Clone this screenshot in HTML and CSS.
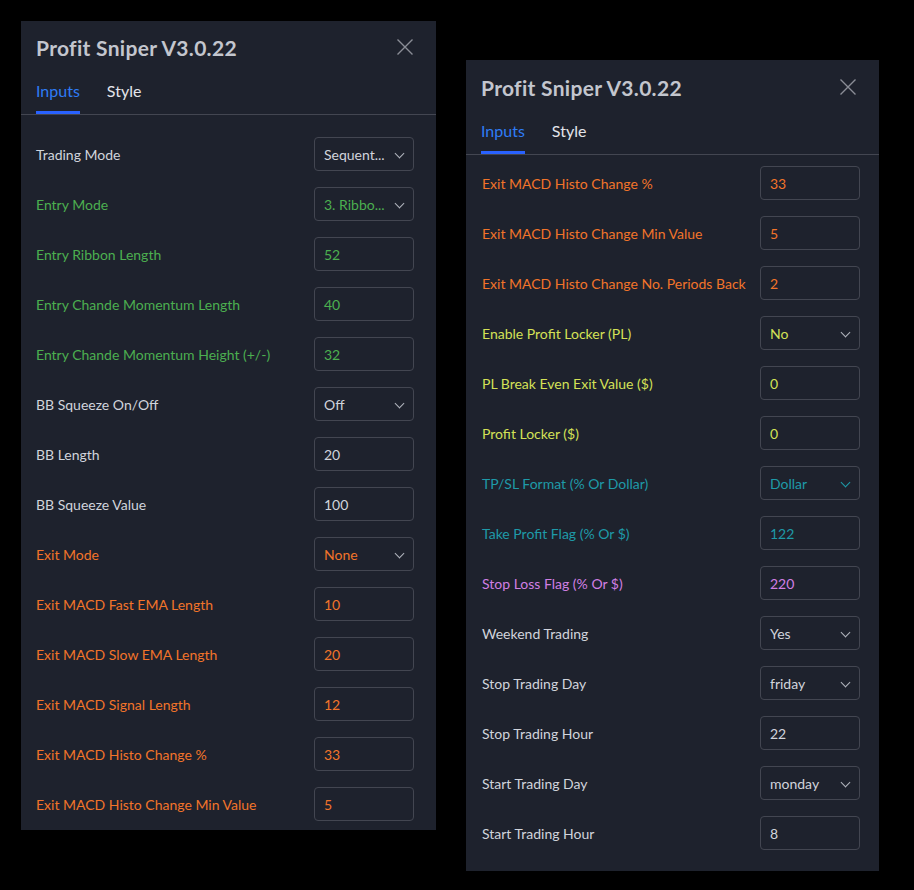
FILE: index.html
```html
<!DOCTYPE html>
<html>
<head>
<meta charset="utf-8">
<link rel="stylesheet" href="styles.css">
</head>
<body>
<div class="stage">
  <section class="panel panel-left">
    <header class="head">
      <h1 class="title">Profit Sniper V3.0.22</h1>
      <svg class="close" width="18" height="18" viewBox="0 0 18 18"><path d="M1.5 1.5 L16.5 16.5 M16.5 1.5 L1.5 16.5" stroke="currentColor" stroke-width="1.4" fill="none"/></svg>
    </header>
    <nav class="tabs"><span class="tab active">Inputs</span><span class="tab">Style</span></nav>
    <div class="rows rows-left">
      <div class="row"><span class="label">Trading Mode</span><span class="field select">Sequent...<i class="chev"></i></span></div>
      <div class="row c-green"><span class="label">Entry Mode</span><span class="field select">3. Ribbo...<i class="chev"></i></span></div>
      <div class="row c-green"><span class="label">Entry Ribbon Length</span><span class="field">52</span></div>
      <div class="row c-green"><span class="label">Entry Chande Momentum Length</span><span class="field">40</span></div>
      <div class="row c-green"><span class="label">Entry Chande Momentum Height (+/-)</span><span class="field">32</span></div>
      <div class="row"><span class="label">BB Squeeze On/Off</span><span class="field select">Off<i class="chev"></i></span></div>
      <div class="row"><span class="label">BB Length</span><span class="field">20</span></div>
      <div class="row"><span class="label">BB Squeeze Value</span><span class="field">100</span></div>
      <div class="row c-orange"><span class="label">Exit Mode</span><span class="field select">None<i class="chev"></i></span></div>
      <div class="row c-orange"><span class="label">Exit MACD Fast EMA Length</span><span class="field">10</span></div>
      <div class="row c-orange"><span class="label">Exit MACD Slow EMA Length</span><span class="field">20</span></div>
      <div class="row c-orange"><span class="label">Exit MACD Signal Length</span><span class="field">12</span></div>
      <div class="row c-orange"><span class="label">Exit MACD Histo Change %</span><span class="field">33</span></div>
      <div class="row c-orange"><span class="label">Exit MACD Histo Change Min Value</span><span class="field">5</span></div>
    </div>
  </section>

  <section class="panel panel-right">
    <header class="head">
      <h1 class="title">Profit Sniper V3.0.22</h1>
      <svg class="close" width="18" height="18" viewBox="0 0 18 18"><path d="M1.5 1.5 L16.5 16.5 M16.5 1.5 L1.5 16.5" stroke="currentColor" stroke-width="1.4" fill="none"/></svg>
    </header>
    <nav class="tabs"><span class="tab active">Inputs</span><span class="tab">Style</span></nav>
    <div class="rows rows-right">
      <div class="row c-orange"><span class="label">Exit MACD Histo Change %</span><span class="field">33</span></div>
      <div class="row c-orange"><span class="label">Exit MACD Histo Change Min Value</span><span class="field">5</span></div>
      <div class="row c-orange"><span class="label">Exit MACD Histo Change No. Periods Back</span><span class="field">2</span></div>
      <div class="row c-yellow"><span class="label">Enable Profit Locker (PL)</span><span class="field select">No<i class="chev"></i></span></div>
      <div class="row c-yellow"><span class="label">PL Break Even Exit Value ($)</span><span class="field">0</span></div>
      <div class="row c-yellow"><span class="label">Profit Locker ($)</span><span class="field">0</span></div>
      <div class="row c-teal"><span class="label">TP/SL Format (% Or Dollar)</span><span class="field select">Dollar<i class="chev"></i></span></div>
      <div class="row c-teal"><span class="label">Take Profit Flag (% Or $)</span><span class="field">122</span></div>
      <div class="row c-purple"><span class="label">Stop Loss Flag (% Or $)</span><span class="field">220</span></div>
      <div class="row"><span class="label">Weekend Trading</span><span class="field select">Yes<i class="chev"></i></span></div>
      <div class="row"><span class="label">Stop Trading Day</span><span class="field select">friday<i class="chev"></i></span></div>
      <div class="row"><span class="label">Stop Trading Hour</span><span class="field">22</span></div>
      <div class="row"><span class="label">Start Trading Day</span><span class="field select">monday<i class="chev"></i></span></div>
      <div class="row"><span class="label">Start Trading Hour</span><span class="field">8</span></div>
    </div>
  </section>
</div>
</body>
</html>
```

FILE: styles.css
```css
html, body {
  margin: 0;
  padding: 0;
  background: #000;
  height: 100%;
}
body {
  font-family: Lato, "Noto Sans", sans-serif;
  color: #d1d4dc;
}
.stage {
  display: flex;
  align-items: flex-start;
  gap: 30px;
  padding: 21px 0 0 21px;
}
.panel {
  background: #1e222d;
  display: flex;
  flex-direction: column;
  overflow: hidden;
}
.panel-left {
  width: 415px;
  height: 809px;
}
.panel-right {
  width: 413px;
  height: 811px;
  margin-top: 39px;
}
.head {
  height: 52px;
  display: flex;
  align-items: center;
  justify-content: space-between;
  padding: 0 22px 0 15px;
  box-sizing: border-box;
  flex: none;
}
.panel-right .head {
  height: 53px;
  padding-top: 1px;
}
.title {
  margin: 0;
  font-size: 21px;
  font-weight: 700;
  color: #c3c6ce;
  letter-spacing: 0.3px;
}
.close {
  color: #8a8d96;
}
.tabs {
  display: flex;
  gap: 27px;
  padding: 0 15px;
  height: 41px;
  border-bottom: 1px solid #434651;
  flex: none;
}
.tab {
  font-size: 16px;
  color: #e3e5ea;
  display: flex;
  align-items: center;
  padding-bottom: 3px;
  box-sizing: border-box;
  height: 41px;
  border-bottom: 3px solid transparent;
}
.tab.active {
  color: #2e7cf6;
  border-bottom-color: #2962ff;
}
.rows {
  display: flex;
  flex-direction: column;
}
.rows-left { padding: 14px 22px 0 15px; }
.rows-right { padding: 3px 19px 0 16px; }
.row {
  height: 50px;
  flex: none;
  display: flex;
  align-items: center;
  justify-content: space-between;
  font-size: 14px;
}
.label {
  white-space: nowrap;
}
.field {
  width: 100px;
  height: 34px;
  box-sizing: border-box;
  border: 1px solid #434651;
  border-radius: 4px;
  display: flex;
  align-items: center;
  padding: 0 9px;
  position: relative;
  font-size: 14px;
}
.chev {
  position: absolute;
  right: 10px;
  top: 12px;
  width: 6px;
  height: 6px;
  border-right: 1.5px solid #b2b5be;
  border-bottom: 1.5px solid #b2b5be;
  transform: rotate(45deg);
}
.c-green { color: #4caf50; }
.c-orange { color: #f2742a; }
.c-yellow { color: #d4e157; }
.c-teal { color: #1e9aa8; }
.c-purple { color: #d17fe3; }
.c-teal .chev { border-color: #1e9aa8; }
```
